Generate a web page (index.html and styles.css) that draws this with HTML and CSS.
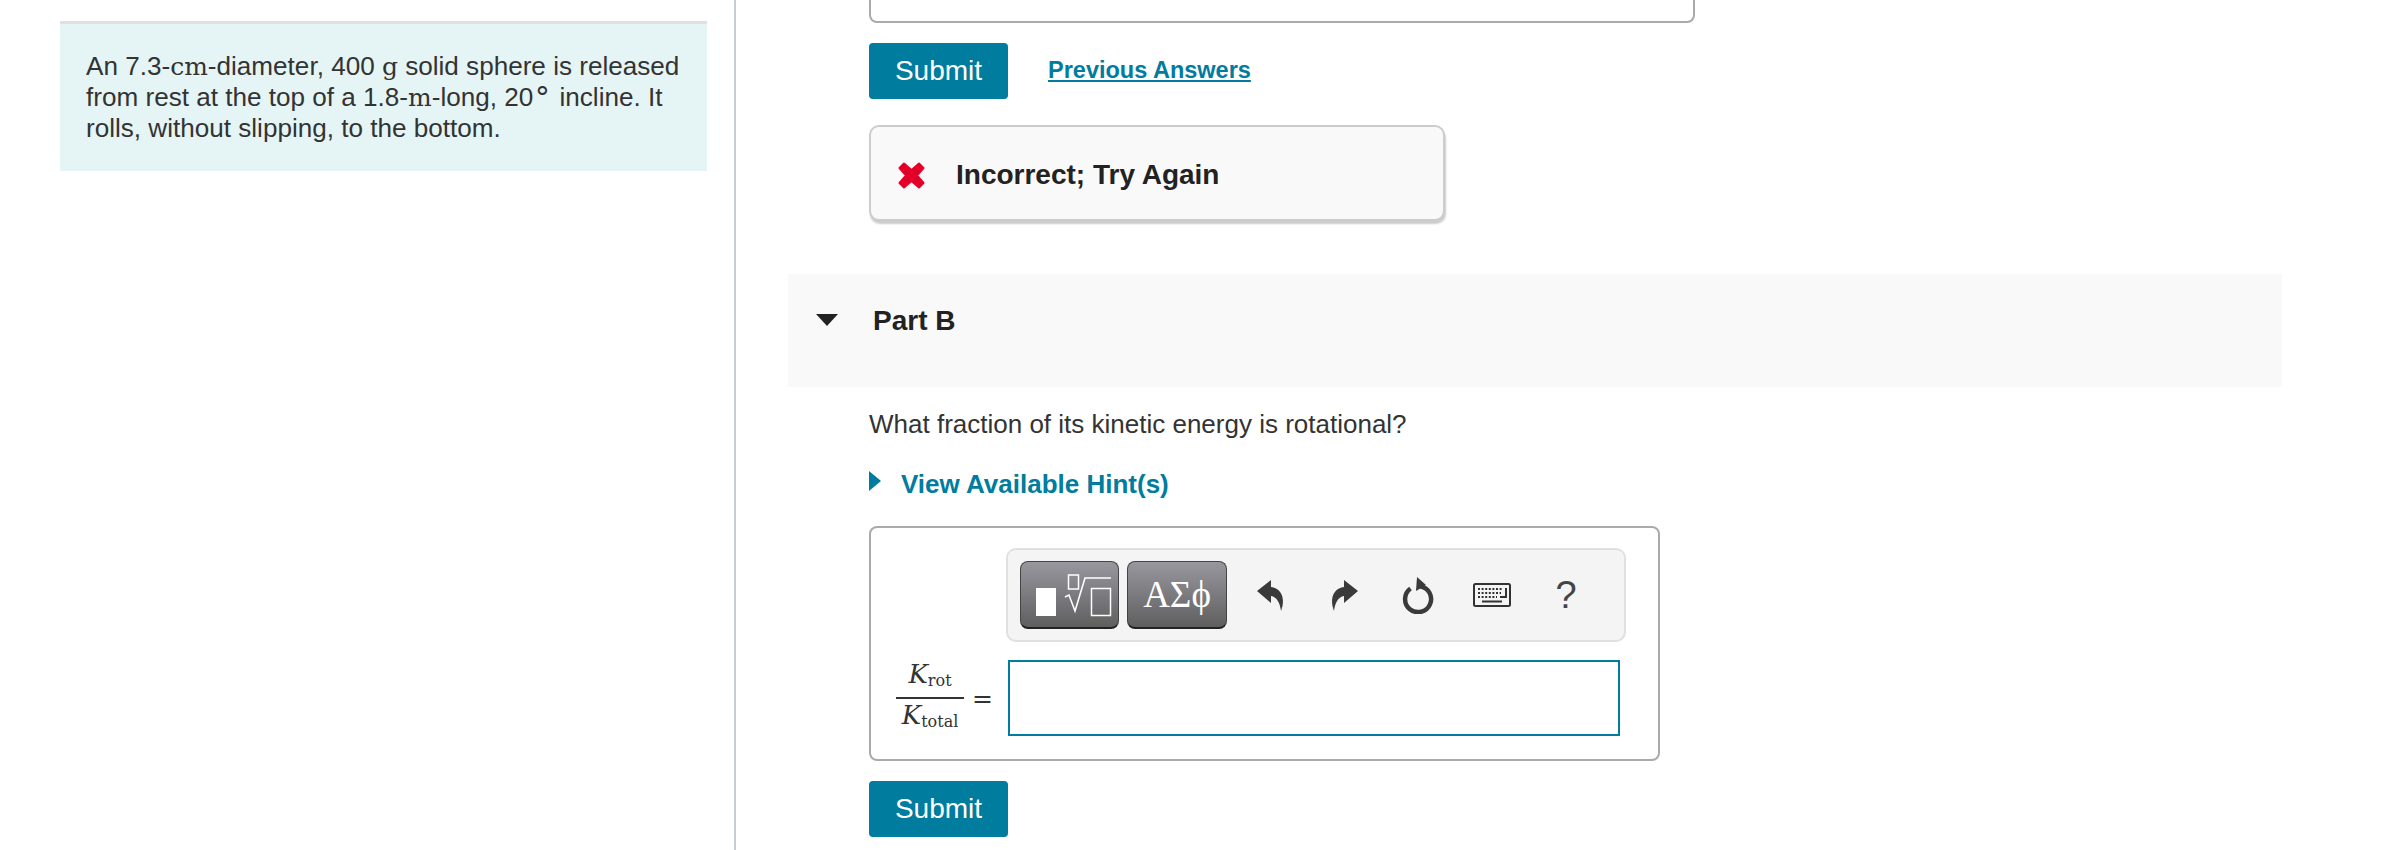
FILE: index.html
```html
<!DOCTYPE html>
<html lang="en">
<head>
    <meta charset="UTF-8">
    <title>Part B</title>
    <link rel="stylesheet" href="styles.css">
</head>
<body>

<div class="page">
    <div class="left">
        <div class="intro">
            An 7.3-<span class="unit">cm</span>-diameter, 400 <span class="unit">g</span> solid sphere is released
            from rest at the top of a 1.8-<span class="unit">m</span>-long, 20<sup class="deg">∘</sup> incline. It
            rolls, without slipping, to the bottom.
        </div>
    </div>

    <div class="right">
        <div class="part-body">
            <div class="answer-stub"></div>
            <div class="submit-row">
                <button class="submit">Submit</button>
                <a class="prev-link" href="#">Previous Answers</a>
            </div>
            <div class="feedback">
                <svg class="x-icon" width="27" height="27" viewBox="0 0 27 27">
                    <path d="M6 1.500 L13.500 8 L21 1.500 L25.500 6 L19 13.500 L25.500 21 L21 25.500 L13.500 19 L6 25.500 L1.500 21 L8 13.500 L1.500 6 Z" fill="#e2002a" stroke="#e2002a" stroke-width="2" stroke-linejoin="round"/>
                </svg>
                <span>Incorrect; Try Again</span>
            </div>
        </div>

        <div class="part-head">
            <span class="arrow-down"></span>
            <span class="part-title">Part B</span>
        </div>

        <div class="part-body">
            <p class="question">What fraction of its kinetic energy is rotational?</p>
            <div class="hint">
                <span class="arrow-right"></span>
                <a href="#">View Available Hint(s)</a>
            </div>

            <div class="answer-box">
                <div class="toolbar">
                    <button class="tool-btn">
                        <svg width="99" height="68" viewBox="0 0 99 68">
                            <rect x="15" y="26" width="20" height="28" fill="#fff"/>
                            <rect x="47.5" y="13" width="10" height="14" fill="none" stroke="#fff" stroke-width="1.5"/>
                            <path d="M44 35 L48 33 L54 49 L64 16 H90" fill="none" stroke="#fff" stroke-width="1.6"/>
                            <rect x="70.5" y="26.5" width="19" height="27" fill="none" stroke="#fff" stroke-width="1.5"/>
                        </svg>
                    </button>
                    <button class="tool-btn greek">ΑΣϕ</button>
                    <div class="tool-icon">
                        <svg width="27" height="31" viewBox="0 0 27 31">
                            <path d="M0 11 L14 0 V7 C24 8 29 18 24 31 C23 23 20 17 14 16 V23 Z" fill="#3a3a3a"/>
                        </svg>
                    </div>
                    <div class="tool-icon">
                        <svg width="27" height="31" viewBox="0 0 27 31">
                            <path d="M27 11 L13 0 V7 C3 8 -2 18 3 31 C4 23 7 17 13 16 V23 Z" fill="#3a3a3a"/>
                        </svg>
                    </div>
                    <div class="tool-icon">
                        <svg width="34" height="37" viewBox="0 0 34 37">
                            <path d="M9.500 11.500 A13 13 0 1 0 19 9.200" fill="none" stroke="#3a3a3a" stroke-width="4.500"/>
                            <path d="M16 0 L25 8 L15 14 Z" fill="#3a3a3a"/>
                        </svg>
                    </div>
                    <div class="tool-icon">
                        <svg width="38" height="24" viewBox="0 0 38 24">
                            <rect x="1" y="1" width="36" height="22" rx="1.5" fill="#f4f4f4" stroke="#333" stroke-width="2"/>
                            <path d="M5 6 H30 M5 10 H28 M5 14 H24" fill="none" stroke="#333" stroke-width="2.2" stroke-dasharray="2 1.600"/>
                            <path d="M33 5 V14 H27 M9 18.500 H29" fill="none" stroke="#333" stroke-width="2"/>
                        </svg>
                    </div>
                    <div class="tool-icon help">?</div>
                </div>

                <div class="math-row">
                    <div class="frac">
                        <div class="num"><i>K</i><span class="sub">rot</span></div>
                        <div class="den"><i>K</i><span class="sub">total</span></div>
                    </div>
                    <span class="equals">=</span>
                    <div class="answer-input"></div>
                </div>
            </div>

            <button class="submit last">Submit</button>
        </div>
    </div>
</div>

</body>
</html>
```

FILE: styles.css
```css
body {
    margin: 0;
    height: 850px;
    overflow: hidden;
    background-color: white;
    font-family: "Liberation Sans", Arial, sans-serif;
    font-size: 26px;
    color: #333;
}

.page {
    display: flex;
    height: 850px;
}

.left {
    width: 734px;
    flex-shrink: 0;
    padding-top: 21px;
    border-right: 2px solid #c3cdd6;
}

.intro {
    margin-left: 60px;
    width: 647px;
    box-sizing: border-box;
    height: 150px;
    padding: 27px 26px 0;
    background-color: #e5f5f6;
    border-top: 3px solid #e0e0e0;
    line-height: 31px;
    font-size: 26.100px;
}

.unit {
    font-family: "DejaVu Serif", serif;
    font-size: 25px;
    line-height: 0;
}

.deg {
    font-family: "Liberation Serif", serif;
    font-size: 30px;
    line-height: 0;
    vertical-align: 6px;
}

.right {
    margin-left: 52px;
    width: 1494px;
}

.part-body {
    padding-left: 81px;
}

.answer-stub {
    width: 822px;
    height: 21px;
    border: 2px solid #aaa;
    border-top: none;
    border-radius: 0 0 8px 8px;
}

.submit-row {
    display: flex;
    align-items: center;
    gap: 40px;
    margin-top: 20px;
}

.submit {
    width: 139px;
    height: 56px;
    padding: 0;
    border: none;
    border-radius: 4px;
    background-color: #007c9e;
    color: white;
    font-family: inherit;
    font-size: 28px;
}

.prev-link {
    margin-bottom: 2px;
    color: #007c9e;
    font-weight: bold;
    font-size: 23.500px;
}

.feedback {
    display: flex;
    align-items: center;
    gap: 31px;
    width: 576px;
    height: 96px;
    box-sizing: border-box;
    margin-top: 26px;
    padding: 4px 0 0 27px;
    background-color: #f9f9f9;
    border: 2px solid #ccc;
    border-radius: 10px;
    box-shadow: 1px 3px 2px #ccc;
    font-weight: bold;
    color: #222;
    font-size: 28px;
}

.part-head {
    display: flex;
    gap: 35px;
    height: 113px;
    box-sizing: border-box;
    margin-top: 53px;
    padding: 31px 0 0 28px;
    background-color: #f9f9f9;
}

.arrow-down {
    width: 0;
    height: 0;
    margin-top: 9px;
    border-left: 11px solid transparent;
    border-right: 11px solid transparent;
    border-top: 12px solid #222;
}

.part-title {
    font-weight: bold;
    font-size: 28px;
    color: #222;
}

.question {
    margin: 21px 0 0;
    line-height: 32px;
}

.hint {
    display: flex;
    align-items: center;
    gap: 20px;
    margin-top: 28px;
    line-height: 32px;
}

.hint a {
    color: #007c9e;
    font-weight: bold;
    text-decoration: none;
}

.arrow-right {
    width: 0;
    height: 0;
    margin-top: -6px;
    border-top: 10px solid transparent;
    border-bottom: 10px solid transparent;
    border-left: 12px solid #007c9e;
}

.answer-box {
    width: 791px;
    height: 235px;
    box-sizing: border-box;
    margin-top: 26px;
    padding-top: 20px;
    border: 2px solid #aaa;
    border-radius: 8px;
}

.toolbar {
    display: flex;
    align-items: center;
    width: 620px;
    height: 94px;
    box-sizing: border-box;
    margin-left: 135px;
    padding-left: 12px;
    background-color: #f4f4f4;
    border: 2px solid #e0e0e0;
    border-radius: 10px;
}

.tool-btn {
    width: 99px;
    height: 68px;
    padding: 0;
    margin-right: 8px;
    border: 1px solid #444;
    border-bottom: 2px solid #222;
    border-radius: 8px;
    background: linear-gradient(#98979f, #5f5f5f);
    color: white;
    overflow: hidden;
}

.tool-btn svg {
    display: block;
}

.greek {
    width: 100px;
    margin-right: 6px;
    font-family: "Liberation Serif", serif;
    font-size: 37px;
}

.tool-icon {
    display: flex;
    justify-content: center;
    width: 74px;
}

.help {
    font-size: 38px;
    color: #444;
}

.math-row {
    display: flex;
    align-items: center;
    margin-top: 16px;
    padding-left: 25px;
}

.frac {
    width: 68px;
    text-align: center;
    font-family: "DejaVu Serif", serif;
    font-size: 26px;
    line-height: 33px;
}

.num {
    border-bottom: 2px solid #333;
}

.sub {
    font-size: 16px;
    vertical-align: -3px;
}

.equals {
    margin-left: 8px;
    width: 36px;
    font-family: "DejaVu Serif", serif;
    font-size: 25px;
}

.answer-input {
    width: 612px;
    height: 76px;
    box-sizing: border-box;
    border: 2px solid #007c9e;
}

.submit.last {
    display: block;
    margin-top: 20px;
}
```
